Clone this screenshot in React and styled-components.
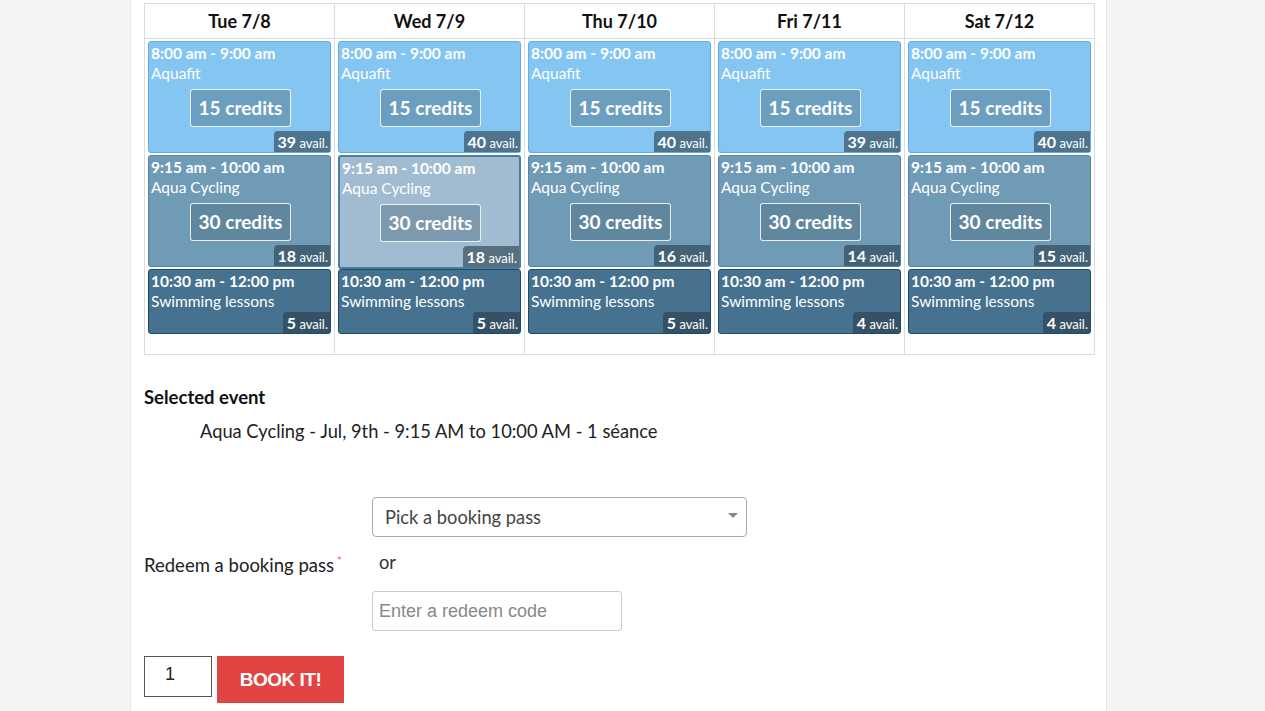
import styled, { createGlobalStyle } from 'styled-components'

const GlobalStyle = createGlobalStyle`
  html, body {
    margin: 0;
    padding: 0;
    background: #f4f4f4;
    font-family: Lato, "Open Sans", sans-serif;
    color: #222;
  }
`

const days = [
  { label: 'Tue 7/8', avail: [39, 18, 5] },
  { label: 'Wed 7/9', avail: [40, 18, 5], selected: 1 },
  { label: 'Thu 7/10', avail: [40, 16, 5] },
  { label: 'Fri 7/11', avail: [39, 14, 4] },
  { label: 'Sat 7/12', avail: [40, 15, 4] },
]

const slots = [
  { time: '8:00 am - 9:00 am', name: 'Aquafit', credits: 15, kind: 'light' },
  { time: '9:15 am - 10:00 am', name: 'Aqua Cycling', credits: 30, kind: 'mid' },
  { time: '10:30 am - 12:00 pm', name: 'Swimming lessons', kind: 'dark' },
]

const palette = {
  light: { bg: '#84c6f1', border: '#5fb0e6' },
  mid: { bg: '#6f9bb7', border: '#57839f' },
  dark: { bg: '#46728f', border: '#1d4b69' },
  selected: { bg: '#a1bcd0', border: '#4a7d9f' },
}

export default function App() {
  return (
    <>
      <GlobalStyle />
      <Panel>
        <Calendar>
          {days.map((day) => (
            <HeadCell key={day.label}>{day.label}</HeadCell>
          ))}
          {days.map((day) => (
            <DayCell key={day.label}>
              {slots.map((slot, i) => {
                const selected = day.selected === i
                return (
                  <Event key={slot.name} $kind={selected ? 'selected' : slot.kind} $selected={selected}>
                    <Time>{slot.time}</Time>
                    <Name>{slot.name}</Name>
                    {slot.credits && <Credits>{slot.credits} credits</Credits>}
                    <AvailRow>
                      <Avail><b>{day.avail[i]}</b> avail.</Avail>
                    </AvailRow>
                  </Event>
                )
              })}
            </DayCell>
          ))}
        </Calendar>

        <SectionTitle>Selected event</SectionTitle>
        <Summary>Aqua Cycling - Jul, 9th - 9:15 AM to 10:00 AM - 1 séance</Summary>

        <RedeemForm>
          <Label>Redeem a booking pass<Required>*</Required></Label>
          <Controls>
            <Select>
              <span>Pick a booking pass</span>
              <Caret />
            </Select>
            <Or>or</Or>
            <CodeInput placeholder="Enter a redeem code" />
          </Controls>
        </RedeemForm>

        <BookRow>
          <Qty defaultValue="1" />
          <BookButton>Book it!</BookButton>
        </BookRow>
      </Panel>
    </>
  )
}

const Panel = styled.div`
  margin-left: 130px;
  width: 962px;
  min-height: 708px;
  background: #fff;
  border-left: 1px solid #e6e6e6;
  border-right: 1px solid #e6e6e6;
  padding: 3px 0 0 13px;
`

const Calendar = styled.div`
  width: 950px;
  display: grid;
  grid-template-columns: repeat(5, 1fr);
  border-top: 1px solid #dcdcdc;
  border-left: 1px solid #dcdcdc;
`

const HeadCell = styled.div`
  height: 34px;
  line-height: 34px;
  text-align: center;
  font-size: 18px;
  font-weight: 700;
  color: #111;
  border-right: 1px solid #dcdcdc;
  border-bottom: 1px solid #dcdcdc;
`

const DayCell = styled.div`
  display: flex;
  flex-direction: column;
  gap: 2px;
  padding: 2px 2px 20px 3px;
  border-right: 1px solid #dcdcdc;
  border-bottom: 1px solid #dcdcdc;
`

const Event = styled.div`
  background: ${(p) => palette[p.$kind].bg};
  border: ${(p) => (p.$selected ? 2 : 1)}px solid ${(p) => palette[p.$kind].border};
  border-radius: 3px;
  color: #fff;
  display: flex;
  flex-direction: column;
  padding: 1px 0 0 2px;
  margin: ${(p) => (p.$selected ? '0 1px -2px 0' : '0 1px 0 0')};
`

const Time = styled.div`
  font-size: 15.5px;
  font-weight: 700;
  line-height: 20px;
`

const Name = styled.div`
  font-size: 15.5px;
  line-height: 21px;
`

const Credits = styled.div`
  align-self: center;
  margin: 5px 0 4px;
  padding: 0 8px;
  height: 36px;
  line-height: 36px;
  font-size: 19px;
  font-weight: 700;
  border: 1px solid rgba(255, 255, 255, 0.85);
  border-radius: 3px;
  background: rgba(80, 110, 130, 0.45);
`

const AvailRow = styled.div`
  display: flex;
  justify-content: flex-end;
`

const Avail = styled.span`
  height: 21px;
  line-height: 22px;
  padding: 0 2px 0 4px;
  font-size: 13px;
  background: rgba(40, 60, 75, 0.6);
  border-top-left-radius: 4px;

  b {
    font-size: 16px;
    font-weight: 700;
  }
`

const SectionTitle = styled.div`
  margin-top: 31px;
  font-size: 18.5px;
  font-weight: 700;
  color: #111;
`

const Summary = styled.div`
  margin: 12px 0 0 56px;
  font-size: 18.3px;
  color: #222;
`

const RedeemForm = styled.div`
  margin-top: 55px;
  display: grid;
  grid-template-columns: 228px 1fr;
  align-items: center;
`

const Label = styled.div`
  font-size: 18.5px;
  color: #222;
  padding-top: 2px;
`

const Required = styled.sup`
  color: #e06060;
  font-size: 11px;
  margin-left: 3px;
`

const Controls = styled.div`
  display: flex;
  flex-direction: column;
  align-items: flex-start;
`

const Select = styled.div`
  box-sizing: border-box;
  width: 375px;
  height: 40px;
  border: 1px solid #aaa;
  border-radius: 4px;
  display: flex;
  align-items: center;
  justify-content: space-between;
  padding: 0 8px 0 12px;
  font-size: 18.3px;
  color: #444;
`

const Caret = styled.span`
  width: 0;
  height: 0;
  border-left: 5px solid transparent;
  border-right: 5px solid transparent;
  border-top: 5px solid #888;
  margin-bottom: 4px;
`

const Or = styled.div`
  font-size: 18.3px;
  color: #333;
  margin: 14px 0 18px 7px;
`

const CodeInput = styled.input`
  box-sizing: border-box;
  width: 250px;
  height: 40px;
  border: 1px solid #ccc;
  border-radius: 3px;
  padding: 0 6px;
  font-family: "Liberation Sans", Arial, sans-serif;
  font-size: 18px;
  color: #333;
  outline: none;

  &::placeholder {
    color: #888;
  }
`

const BookRow = styled.div`
  margin-top: 25px;
  display: flex;
  align-items: flex-start;
  gap: 5px;
`

const Qty = styled.input`
  box-sizing: border-box;
  width: 68px;
  height: 41px;
  border: 1px solid #555;
  padding: 0 0 4px 20px;
  font-family: "Liberation Sans", Arial, sans-serif;
  font-size: 18px;
  color: #222;
  outline: none;
`

const BookButton = styled.button`
  width: 127px;
  height: 47px;
  border: none;
  background: #e24444;
  color: #fff;
  font-family: "Liberation Sans", Arial, sans-serif;
  font-size: 19px;
  font-weight: 700;
  text-transform: uppercase;
  letter-spacing: -0.5px;
  cursor: pointer;
`
